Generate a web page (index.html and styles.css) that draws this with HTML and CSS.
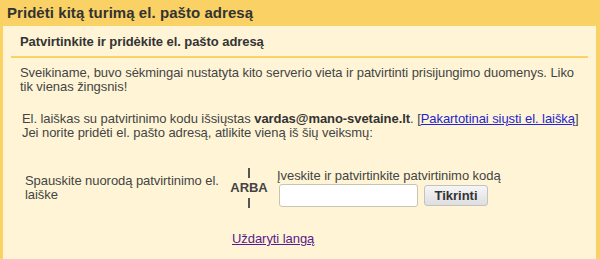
FILE: index.html
```html
<!DOCTYPE html>
<html lang="lt">
<head>
<meta charset="utf-8">
<title>Pridėti kitą turimą el. pašto adresą</title>
<link rel="stylesheet" href="styles.css">
</head>
<body>
<div class="dialog">
  <div class="header">Pridėti kitą turimą el. pašto adresą</div>
  <div class="content">
    <div class="subtitle">Patvirtinkite ir pridėkite el. pašto adresą</div>
    <p class="intro">Sveikiname, buvo sėkmingai nustatyta kito serverio vieta ir patvirtinti prisijungimo duomenys. Liko tik vienas žingsnis!</p>
    <p class="sent">El. laiškas su patvirtinimo kodu išsiųstas <b>vardas@mano-svetaine.lt</b>. [<a class="link" href="#">Pakartotinai siųsti el. laišką</a>]<br>Jei norite pridėti el. pašto adresą, atlikite vieną iš šių veiksmų:</p>
    <div class="choices">
      <div class="choice-left">Spauskite nuorodą patvirtinimo el. laiške</div>
      <div class="or">
        <span class="or-line"></span>
        <span class="or-text">ARBA</span>
        <span class="or-line"></span>
      </div>
      <div class="choice-right">
        <div class="code-label">Įveskite ir patvirtinkite patvirtinimo kodą</div>
        <div class="code-row">
          <input class="code-input" type="text">
          <button class="verify" type="button">Tikrinti</button>
        </div>
      </div>
    </div>
    <a class="close" href="#">Uždaryti langą</a>
  </div>
</div>
</body>
</html>
```
FILE: styles.css
```css
html, body {
  margin: 0;
  padding: 0;
  height: 100%;
}
body {
  font-family: "Liberation Sans", Arial, sans-serif;
  font-size: 13px;
  color: #444;
  background: #fff5d6;
}
.dialog {
  background: #f9d164;
  padding: 0 4px 0 3px;
  min-height: 100%;
  box-sizing: border-box;
  display: flex;
  flex-direction: column;
}
.header {
  height: 26px;
  line-height: 26px;
  font-size: 15px;
  font-weight: bold;
  color: #333;
  padding-left: 4px;
  letter-spacing: 0.05px;
}
.content {
  flex: 1;
  background: #fff5d6;
  display: flex;
  flex-direction: column;
  align-items: flex-start;
  letter-spacing: -0.06px;
}
.subtitle {
  align-self: stretch;
  margin: 0 8px;
  padding: 8px 9px 7px;
  line-height: 15px;
  font-weight: bold;
  color: #333;
  border-bottom: 2px solid #f9d164;
}
.intro {
  margin: 8px 0 0 17px;
  line-height: 14px;
  width: 560px;
}
.sent {
  margin: 18px 0 0 19px;
  line-height: 14px;
}
.sent b {
  color: #333;
}
.link {
  color: #2424d0;
}
.choices {
  display: flex;
  align-items: center;
  margin: 28px 0 0 22px;
}
.choice-left {
  width: 201px;
  line-height: 14px;
  margin-right: 6px;
}
.or {
  width: 34px;
  display: flex;
  flex-direction: column;
  align-items: center;
  margin-right: 11px;
}
.or-line {
  width: 2px;
  height: 10px;
  background: #555;
}
.or-text {
  font-weight: bold;
  line-height: 14px;
  margin: 3px 0;
  color: #444;
}
.choice-right {
  display: flex;
  flex-direction: column;
}
.code-label {
  line-height: 14px;
}
.code-row {
  display: flex;
  align-items: flex-start;
  margin-top: 1px;
  margin-left: 2px;
}
.code-input {
  width: 139px;
  height: 23px;
  box-sizing: border-box;
  border: 1px solid #c8c4b4;
  border-radius: 3px;
  background: #fff;
  margin: 0;
  padding: 0 4px;
  font-family: inherit;
  font-size: 13px;
}
.verify {
  width: 64px;
  height: 21px;
  margin: 1px 0 0 6px;
  padding: 0;
  border: 1px solid #c2c2c2;
  border-radius: 3px;
  background: linear-gradient(#f6f6f6, #dedede);
  font-family: inherit;
  font-size: 13px;
  font-weight: bold;
  color: #333;
}
.close {
  margin: 24px 0 0 229px;
  line-height: 14px;
  color: #5a1a8b;
}
```
